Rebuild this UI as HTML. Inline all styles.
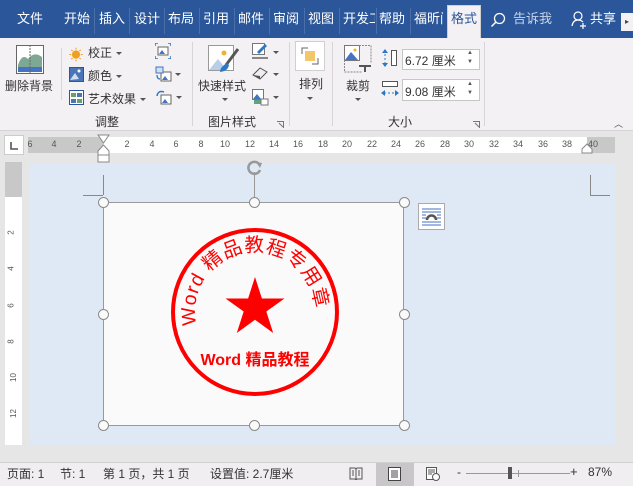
<!DOCTYPE html>
<html><head><meta charset="utf-8"><style>
*{margin:0;padding:0;box-sizing:border-box}
body{width:633px;height:486px;overflow:hidden;position:relative;background:#e6e6e6;font-family:"Liberation Sans","Noto Sans CJK SC",sans-serif;font-size:12px;color:#333}
.a{position:absolute;white-space:nowrap}
.tab{position:absolute;top:10px;color:#fff;font-size:13px;line-height:18px;white-space:nowrap;overflow:hidden;height:18px}
.sep{position:absolute;top:8px;width:1px;height:26px;background:#4a6fa8}
.gs{position:absolute;top:42px;width:1px;height:84px;background:#d8d4d8}
.arr{position:absolute;width:0;height:0;border-left:3px solid transparent;border-right:3px solid transparent;border-top:3px solid #555}
.rn{position:absolute;top:139px;font-size:9px;color:#555;transform:translateX(-50%)}
.vn{position:absolute;left:9px;font-size:8px;color:#555;transform:rotate(-90deg)}
.h{position:absolute;width:11px;height:11px;border-radius:50%;border:1.5px solid #8a8a8a;background:#fafafa}
</style></head><body>
<div class="a" style="left:0;top:0;width:633px;height:38px;background:#2b579a"></div>
<div class="tab" style="left:17px">文件</div>
<div class="tab" style="left:64px">开始</div><div class="sep" style="left:94px"></div>
<div class="tab" style="left:99px">插入</div><div class="sep" style="left:129px"></div>
<div class="tab" style="left:134px">设计</div><div class="sep" style="left:164px"></div>
<div class="tab" style="left:168px">布局</div><div class="sep" style="left:199px"></div>
<div class="tab" style="left:203px">引用</div><div class="sep" style="left:234px"></div>
<div class="tab" style="left:238px">邮件</div><div class="sep" style="left:269px"></div>
<div class="tab" style="left:273px">审阅</div><div class="sep" style="left:304px"></div>
<div class="tab" style="left:308px">视图</div><div class="sep" style="left:339px"></div>
<div class="tab" style="left:343px;width:32px">开发工</div><div class="sep" style="left:376px"></div>
<div class="tab" style="left:379px">帮助</div><div class="sep" style="left:410px"></div>
<div class="tab" style="left:414px;width:29px">福昕阅</div>
<div class="a" style="left:447px;top:5px;width:34px;height:34px;background:#f4f1f4;border:1px solid #d0d0d0;border-bottom:none"></div>
<div class="tab" style="left:451px;color:#2b579a">格式</div>
<svg class="a" style="left:490px;top:12px" width="16" height="16"><circle cx="9.5" cy="6.5" r="5" fill="none" stroke="#fff" stroke-width="1.3"/><line x1="6" y1="10" x2="1.5" y2="14.5" stroke="#fff" stroke-width="1.5"/></svg>
<div class="tab" style="left:513px;color:#c8d4e8">告诉我</div>
<svg class="a" style="left:571px;top:11px" width="16" height="18"><circle cx="7" cy="5" r="4" fill="none" stroke="#fff" stroke-width="1.2"/><path d="M1 15 Q2 9 7 9 Q10 9 12 11" fill="none" stroke="#fff" stroke-width="1.2"/><path d="M12 12v6M9 15h6" stroke="#fff" stroke-width="1.2"/></svg>
<div class="tab" style="left:590px">共享</div>
<div class="a" style="left:621px;top:13px;width:12px;height:18px;background:#f4f1f4;font-size:8px;color:#444;text-align:center;line-height:18px">▸</div>
<div class="a" style="left:0;top:38px;width:633px;height:93px;background:#f4f1f4;border-bottom:1px solid #d6d3d6"></div>
<svg class="a" style="left:16px;top:45px" width="28" height="29"><rect x="0.5" y="0.5" width="27" height="28" fill="#fff" stroke="#666"/><path d="M2 20 Q6 8 12 14 Q18 6 26 12 V22 H2Z" fill="#7fa894"/><rect x="2" y="22" width="24" height="5" fill="#4472c4"/><line x1="14" y1="0" x2="14" y2="29" stroke="#666" stroke-dasharray="2,1"/></svg>
<div class="a" style="left:5px;top:77px;font-size:12px">删除背景</div>
<div class="gs" style="left:61px;top:48px;height:52px"></div>
<div class="a" style="left:69px;top:45px;color:#f0a020;font-size:14px">☀</div>
<div class="a" style="left:88px;top:44px">校正</div><div class="arr" style="left:116px;top:52px"></div>
<svg class="a" style="left:69px;top:67px" width="15" height="15"><rect x=".5" y=".5" width="14" height="14" fill="#4a76b8" stroke="#2b579a"/><circle cx="10" cy="4" r="1.5" fill="#fff"/><path d="M1 13 L6 6 L10 12Z" fill="#cfe0f0"/></svg>
<div class="a" style="left:88px;top:67px">颜色</div><div class="arr" style="left:116px;top:75px"></div>
<svg class="a" style="left:69px;top:90px" width="15" height="15"><rect x=".5" y=".5" width="14" height="14" fill="#fff" stroke="#2b579a"/><rect x="2" y="3" width="5" height="4" fill="#6aa06a"/><rect x="8" y="3" width="5" height="4" fill="#4a76b8"/><rect x="2" y="9" width="5" height="4" fill="#4a76b8"/><rect x="8" y="9" width="5" height="4" fill="#6aa06a"/></svg>
<div class="a" style="left:88px;top:90px">艺术效果</div><div class="arr" style="left:140px;top:98px"></div>
<svg class="a" style="left:155px;top:43px" width="16" height="16"><rect x="3" y="4" width="10" height="8" fill="#fff" stroke="#666"/><path d="M4 11 L7 7 L10 11Z" fill="#4472c4"/><path d="M0 0h3M0 0v3M16 0h-3M16 0v3M0 16h3M0 16v-3M16 16h-3M16 16v-3" stroke="#2b79c4" stroke-width="1.5"/></svg>
<svg class="a" style="left:155px;top:66px" width="17" height="16"><rect x="6" y="6" width="10" height="9" fill="#fff" stroke="#666"/><path d="M7 14 L10 10 L13 14Z" fill="#4472c4"/><rect x="1" y="1" width="7" height="6" fill="#cfe0f0" stroke="#4472c4"/><path d="M2 9 Q2 13 5 13" fill="none" stroke="#2b79c4" stroke-width="1.3"/></svg><div class="arr" style="left:175px;top:73px"></div>
<svg class="a" style="left:155px;top:89px" width="17" height="16"><rect x="6" y="6" width="10" height="9" fill="#fff" stroke="#666"/><path d="M7 14 L10 10 L13 14Z" fill="#4472c4"/><path d="M2 7 Q3 1 9 3" fill="none" stroke="#2b79c4" stroke-width="1.5"/></svg><div class="arr" style="left:176px;top:96px"></div>
<div class="a" style="left:95px;top:113px">调整</div>
<div class="gs" style="left:192px"></div>
<svg class="a" style="left:208px;top:45px" width="31" height="28"><rect x=".5" y=".5" width="25" height="25" fill="#fff" stroke="#999"/><path d="M1 25 L10 14 L19 25Z" fill="#b9cfe8"/><circle cx="16" cy="8" r="2.5" fill="#f0b030"/><path d="M30 4 L18 20" stroke="#555" stroke-width="3"/><path d="M19 18 Q12 22 12 27 Q20 26 21 20Z" fill="#2b79c4"/></svg>
<div class="a" style="left:198px;top:77px">快速样式</div><div class="arr" style="left:222px;top:98px"></div>
<svg class="a" style="left:252px;top:43px" width="16" height="16"><rect x=".5" y=".5" width="12" height="11" fill="#fff" stroke="#777"/><path d="M5 9 L13 1 L15 3 L7 11Z" fill="#2b79c4"/><rect x="0" y="14" width="16" height="2" fill="#888"/></svg><div class="arr" style="left:273px;top:51px"></div>
<svg class="a" style="left:252px;top:66px" width="16" height="14"><path d="M1 9 L8 2 L15 6 L8 13Z" fill="#eee" stroke="#555"/><path d="M1 9 L8 13 L8 10Z" fill="#555"/></svg><div class="arr" style="left:273px;top:73px"></div>
<svg class="a" style="left:252px;top:89px" width="17" height="17"><rect x=".5" y=".5" width="11" height="10" fill="#fff" stroke="#777"/><path d="M1 10 L5 5 L9 10Z" fill="#4472c4"/><path d="M2 12h7M2 14h7" stroke="#2e8b57" stroke-width="1.5"/><rect x="9" y="10" width="7" height="6" fill="#fff" stroke="#777"/></svg><div class="arr" style="left:273px;top:96px"></div>
<div class="a" style="left:208px;top:113px">图片样式</div>
<svg class="a" style="left:277px;top:121px" width="7" height="7"><path d="M0 .5h6.5v6.5M2 2l4 4" stroke="#777" fill="none"/></svg>
<div class="gs" style="left:289px"></div>
<div class="a" style="left:295px;top:41px;width:30px;height:30px;background:#fff;border:1px solid #d0d0d0"></div>
<svg class="a" style="left:301px;top:47px" width="18" height="18"><rect x="4" y="4" width="10" height="10" fill="#f3c56c"/><path d="M1 7V1h6M17 11v6h-6" stroke="#666" fill="none"/></svg>
<div class="a" style="left:299px;top:75px">排列</div><div class="arr" style="left:307px;top:97px"></div>
<div class="gs" style="left:332px"></div>
<svg class="a" style="left:344px;top:45px" width="28" height="28"><rect x=".5" y=".5" width="15" height="15" fill="#fff" stroke="#777"/><path d="M1 15 L7 7 L14 15Z" fill="#4472c4"/><circle cx="11" cy="5" r="1.5" fill="#f0b030"/><path d="M15 .5h12v18M.5 15v12h18" stroke="#888" fill="none" stroke-dasharray="2,1"/><path d="M21 27v-6h-6M21 21h6" stroke="#555" stroke-width="2" fill="none"/></svg>
<div class="a" style="left:346px;top:77px">裁剪</div><div class="arr" style="left:355px;top:98px"></div>
<svg class="a" style="left:381px;top:49px" width="17" height="18"><path d="M4 1v16" stroke="#2b79c4" stroke-dasharray="2,2"/><path d="M1 4 L4 0 L7 4M1 14 L4 18 L7 14" fill="#2b79c4"/><rect x="10.5" y="1.5" width="5" height="15" fill="#fff" stroke="#555"/></svg>
<div class="a" style="left:402px;top:49px;width:78px;height:21px;background:#fff;border:1px solid #c6c6c6;padding:2px 0 0 2px;font-size:12px">6.72 厘米</div>
<div class="a" style="left:467px;top:49px;font-size:6px;color:#555;line-height:9px">▲<br>▼</div>
<svg class="a" style="left:381px;top:80px" width="18" height="18"><rect x="1.5" y="1.5" width="15" height="5" fill="#fff" stroke="#555"/><path d="M3 13h12" stroke="#2b79c4" stroke-dasharray="2,2"/><path d="M4 10 L0 13 L4 16M14 10 L18 13 L14 16" fill="#2b79c4"/></svg>
<div class="a" style="left:402px;top:79px;width:78px;height:22px;background:#fff;border:1px solid #c6c6c6;padding:3px 0 0 2px;font-size:12px">9.08 厘米</div>
<div class="a" style="left:467px;top:80px;font-size:6px;color:#555;line-height:9px">▲<br>▼</div>
<div class="a" style="left:388px;top:113px">大小</div>
<svg class="a" style="left:473px;top:121px" width="7" height="7"><path d="M0 .5h6.5v6.5M2 2l4 4" stroke="#777" fill="none"/></svg>
<div class="gs" style="left:484px"></div>
<div class="a" style="left:614px;top:117px;font-size:9px;color:#555">︿</div>
<div class="a" style="left:4px;top:135px;width:20px;height:20px;background:#fff;border:1px solid #ccc"></div>
<svg class="a" style="left:9px;top:141px" width="10" height="10"><path d="M2 1v7h7" stroke="#555" stroke-width="1.6" fill="none"/></svg>
<div class="a" style="left:28px;top:137px;width:587px;height:16px;background:#c8c8c8"></div>
<div class="a" style="left:103px;top:137px;width:484px;height:16px;background:#fff"></div>
<div class="rn" style="left:30px">6</div><div class="rn" style="left:54px">4</div><div class="rn" style="left:79px">2</div>
<div class="rn" style="left:127px">2</div><div class="rn" style="left:152px">4</div><div class="rn" style="left:176px">6</div><div class="rn" style="left:201px">8</div><div class="rn" style="left:225px">10</div><div class="rn" style="left:250px">12</div><div class="rn" style="left:274px">14</div><div class="rn" style="left:298px">16</div><div class="rn" style="left:323px">18</div><div class="rn" style="left:347px">20</div><div class="rn" style="left:372px">22</div><div class="rn" style="left:396px">24</div><div class="rn" style="left:420px">26</div><div class="rn" style="left:445px">28</div><div class="rn" style="left:469px">30</div><div class="rn" style="left:494px">32</div><div class="rn" style="left:518px">34</div><div class="rn" style="left:543px">36</div><div class="rn" style="left:567px">38</div><div class="rn" style="left:593px">40</div>
<svg class="a" style="left:97px;top:134px" width="13" height="30"><path d="M1 1h11L6.5 9Z" fill="#fff" stroke="#888"/><path d="M6.5 11 L12 17 V21 H1 V17Z" fill="#fff" stroke="#888"/><rect x="1" y="21" width="11" height="7" fill="#fff" stroke="#888"/></svg>
<svg class="a" style="left:581px;top:143px" width="12" height="12"><path d="M6 1 L11 6 V10 H1 V6Z" fill="#fff" stroke="#888"/></svg>
<div class="a" style="left:5px;top:162px;width:17px;height:283px;background:#fff"></div>
<div class="a" style="left:5px;top:162px;width:17px;height:35px;background:#c8c8c8"></div>
<div class="vn" style="top:228px">2</div><div class="vn" style="top:264px">4</div><div class="vn" style="top:301px">6</div><div class="vn" style="top:337px">8</div><div class="vn" style="top:373px">10</div><div class="vn" style="top:409px">12</div>
<div class="a" style="left:30px;top:163px;width:585px;height:282px;background:#dfe9f5"></div>
<div class="a" style="left:83px;top:195px;width:20px;height:1px;background:#888"></div>
<div class="a" style="left:103px;top:175px;width:1px;height:20px;background:#888"></div>
<div class="a" style="left:590px;top:195px;width:20px;height:1px;background:#888"></div>
<div class="a" style="left:590px;top:175px;width:1px;height:20px;background:#888"></div>
<div class="a" style="left:103px;top:202px;width:301px;height:224px;background:#fafafa;border:1px solid #999"></div>
<div class="a" style="left:254px;top:172px;width:1px;height:30px;background:#999"></div>
<svg class="a" style="left:245px;top:160px" width="20" height="17"><path d="M15 10 A6 6 0 1 1 14 4" fill="none" stroke="#999" stroke-width="2.5"/><path d="M11 2 L17 3 L15 8Z" fill="#999"/></svg>
<svg class="a" style="left:103px;top:202px" width="302" height="225">
<circle cx="152" cy="110" r="82" fill="none" stroke="#f00" stroke-width="4"/>
<polygon fill="#f00" points="152,75 158.9,96.5 181.5,96.5 163.3,109.5 170.2,131 152,117.8 133.8,131 140.7,109.5 122.5,96.5 145.1,96.5"/>
<defs><path id="arc" d="M 93.5 123 A 60 60 0 1 1 210.5 123"/></defs>
<text font-family="Liberation Sans,Noto Sans CJK SC,sans-serif" font-size="19.5" fill="#f00"><textPath href="#arc" textLength="198" lengthAdjust="spacing">Word 精品教程专用章</textPath></text>
<text x="152" y="163" text-anchor="middle" font-family="Liberation Sans,Noto Sans CJK SC,sans-serif" font-size="16" font-weight="bold" fill="#f00">Word 精品教程</text>
</svg>
<div class="h" style="left:98px;top:197px"></div><div class="h" style="left:249px;top:197px"></div><div class="h" style="left:399px;top:197px"></div>
<div class="h" style="left:98px;top:309px"></div><div class="h" style="left:399px;top:309px"></div>
<div class="h" style="left:98px;top:420px"></div><div class="h" style="left:249px;top:420px"></div><div class="h" style="left:399px;top:420px"></div>
<div class="a" style="left:418px;top:203px;width:27px;height:27px;background:#fff;border:1px solid #aaa"></div>
<svg class="a" style="left:421px;top:208px" width="21" height="18"><path d="M1 1h19M1 4h19M1 14h19M1 17h19M1 7h4M16 7h4M1 10h4M16 10h4" stroke="#4472c4"/><path d="M6 12 A4.5 4.5 0 0 1 15 12" fill="none" stroke="#555" stroke-width="2.5"/></svg>
<div class="a" style="left:0;top:462px;width:633px;height:24px;background:#f1eef1;border-top:1px solid #d0d0d0"></div>
<div class="a" style="left:7px;top:465px">页面: 1</div>
<div class="a" style="left:60px;top:465px">节: 1</div>
<div class="a" style="left:103px;top:465px">第 1 页，共 1 页</div>
<div class="a" style="left:210px;top:465px">设置值: 2.7厘米</div>
<svg class="a" style="left:349px;top:467px" width="14" height="13"><path d="M1 1h5l1 1 1-1h5v11H8l-1 1-1-1H1Z" fill="none" stroke="#555"/><path d="M7 2v10M3 4h2M3 6h2M3 8h2M9 4h2M9 6h2M9 8h2" stroke="#555"/></svg>
<div class="a" style="left:376px;top:463px;width:38px;height:23px;background:#c8c6c8"></div>
<svg class="a" style="left:388px;top:467px" width="13" height="14"><rect x=".5" y=".5" width="12" height="13" fill="#fff" stroke="#444"/><path d="M3 4h7M3 6h7M3 8h7M3 10h7" stroke="#444"/></svg>
<svg class="a" style="left:426px;top:467px" width="14" height="14"><rect x=".5" y=".5" width="10" height="12" fill="#fff" stroke="#555"/><path d="M2 3h7M2 5h7M2 7h4" stroke="#555"/><circle cx="10" cy="10" r="3.5" fill="#fff" stroke="#555"/></svg>
<div class="a" style="left:457px;top:465px">-</div>
<div class="a" style="left:466px;top:473px;width:104px;height:1px;background:#999"></div>
<div class="a" style="left:508px;top:467px;width:4px;height:12px;background:#555"></div>
<div class="a" style="left:518px;top:470px;width:1px;height:7px;background:#999"></div>
<div class="a" style="left:570px;top:464px;font-size:13px">+</div>
<div class="a" style="left:588px;top:465px">87%</div>
</body></html>
